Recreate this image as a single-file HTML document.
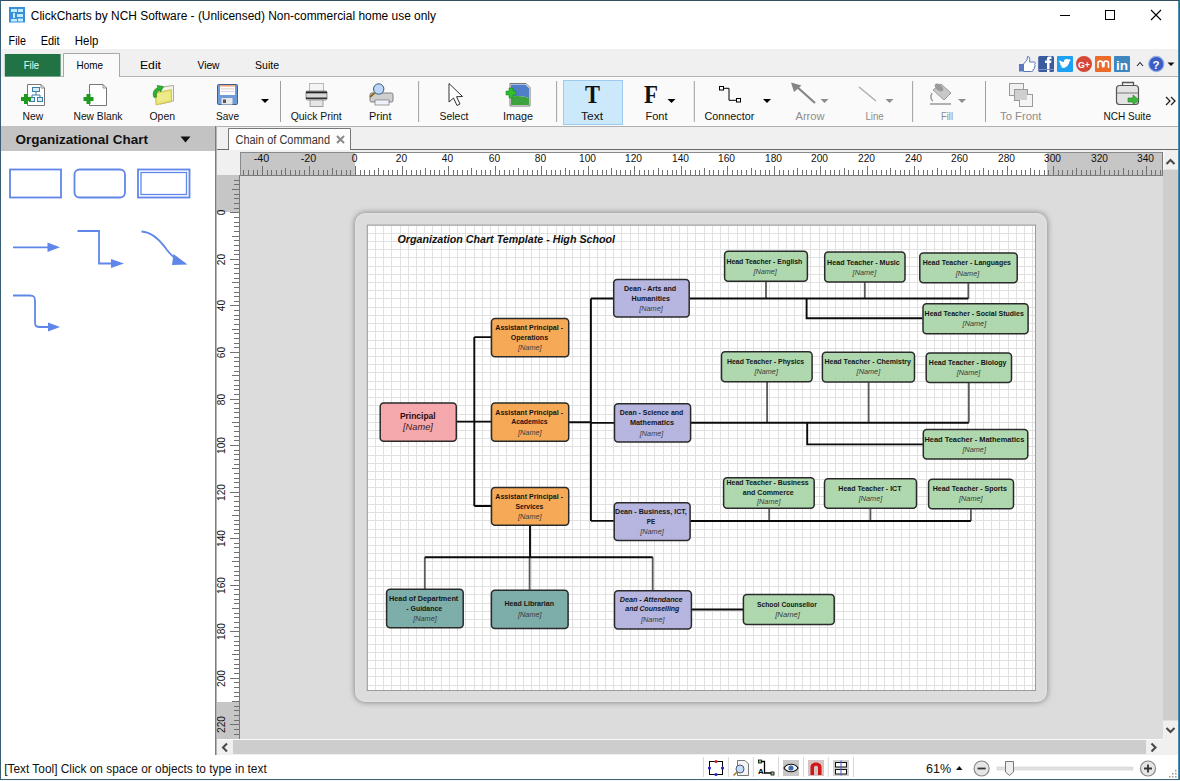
<!DOCTYPE html>
<html><head><meta charset="utf-8"><style>
html,body{margin:0;padding:0;width:1180px;height:781px;overflow:hidden;background:#fff}
svg{display:block;font-family:"Liberation Sans",sans-serif}
</style></head><body>
<svg width="1180" height="781" viewBox="0 0 1180 781">
<rect x="0" y="0" width="1180" height="781" fill="#ffffff" /><rect x="9" y="7" width="16" height="15.5" fill="#3a8fdc" /><rect x="11" y="9" width="6" height="3" fill="#bff0ff" /><rect x="18" y="9" width="5" height="3" fill="#bff0ff" /><rect x="13" y="13" width="2" height="5" fill="#bff0ff" /><rect x="17" y="14" width="6" height="3" fill="#bff0ff" /><rect x="11" y="19" width="6" height="2.5" fill="#bff0ff" /><rect x="18" y="18.5" width="5" height="3" fill="#bff0ff" /><text x="30.80" y="19.60" font-size="12" font-weight="normal" font-style="normal" fill="#000" textLength="405.20" lengthAdjust="spacingAndGlyphs" >ClickCharts by NCH Software - (Unlicensed) Non-commercial home use only</text><rect x="1060" y="15" width="10" height="1" fill="#000" /><rect x="1105.5" y="10.5" width="9" height="9" fill="none" stroke="#000" stroke-width="1"/><path d="M1151 10 L1161 20 M1161 10 L1151 20" stroke="#000" stroke-width="1.1"/><text x="8.60" y="44.70" font-size="12" font-weight="normal" font-style="normal" fill="#000" textLength="17.30" lengthAdjust="spacingAndGlyphs" >File</text><text x="40.70" y="44.70" font-size="12" font-weight="normal" font-style="normal" fill="#000" textLength="18.90" lengthAdjust="spacingAndGlyphs" >Edit</text><text x="74.80" y="44.70" font-size="12" font-weight="normal" font-style="normal" fill="#000" textLength="23.50" lengthAdjust="spacingAndGlyphs" >Help</text><rect x="1" y="49" width="1177" height="28" fill="#f0f0f0" /><rect x="61" y="76" width="1117" height="1" fill="#b4b4b4" /><rect x="4.8" y="54" width="55.8" height="22.6" fill="#217346" /><text x="23.80" y="69.00" font-size="11.5" font-weight="normal" font-style="normal" fill="#e8fff0" textLength="15.30" lengthAdjust="spacingAndGlyphs" >File</text><path d="M63.5 77 V53.5 H119.5 V77" fill="#fafafa" stroke="#a8a8a8" stroke-width="1"/><text x="76.60" y="69.00" font-size="11.5" font-weight="normal" font-style="normal" fill="#000" textLength="26.40" lengthAdjust="spacingAndGlyphs" >Home</text><text x="140.00" y="69.00" font-size="11.5" font-weight="normal" font-style="normal" fill="#000" textLength="21.00" lengthAdjust="spacingAndGlyphs" >Edit</text><text x="197.50" y="69.00" font-size="11.5" font-weight="normal" font-style="normal" fill="#000" textLength="22.00" lengthAdjust="spacingAndGlyphs" >View</text><text x="255.00" y="69.00" font-size="11.5" font-weight="normal" font-style="normal" fill="#000" textLength="24.00" lengthAdjust="spacingAndGlyphs" >Suite</text><rect x="1" y="77" width="1177" height="49" fill="#fafafa" /><rect x="0" y="0" width="1180" height="1" fill="#2f4f63" /><rect x="0" y="0" width="1" height="781" fill="#2f5f80" /><rect x="1178" y="0" width="2" height="781" fill="#4a8fb0" /><rect x="0" y="779" width="1180" height="2" fill="#4a8fb0" /><rect x="563.5" y="80.5" width="59" height="44" fill="#cce8fb" stroke="#9ccbef" stroke-width="1"/><text x="22.60" y="119.80" font-size="10.5" font-weight="normal" font-style="normal" fill="#111" textLength="20.60" lengthAdjust="spacingAndGlyphs" >New</text><text x="73.50" y="119.80" font-size="10.5" font-weight="normal" font-style="normal" fill="#111" textLength="49.00" lengthAdjust="spacingAndGlyphs" >New Blank</text><text x="149.50" y="119.80" font-size="10.5" font-weight="normal" font-style="normal" fill="#111" textLength="25.50" lengthAdjust="spacingAndGlyphs" >Open</text><text x="216.00" y="119.80" font-size="10.5" font-weight="normal" font-style="normal" fill="#111" textLength="23.00" lengthAdjust="spacingAndGlyphs" >Save</text><text x="290.70" y="119.80" font-size="10.5" font-weight="normal" font-style="normal" fill="#111" textLength="51.10" lengthAdjust="spacingAndGlyphs" >Quick Print</text><text x="369.00" y="119.80" font-size="10.5" font-weight="normal" font-style="normal" fill="#111" textLength="22.50" lengthAdjust="spacingAndGlyphs" >Print</text><text x="439.50" y="119.80" font-size="10.5" font-weight="normal" font-style="normal" fill="#111" textLength="29.00" lengthAdjust="spacingAndGlyphs" >Select</text><text x="503.00" y="119.80" font-size="10.5" font-weight="normal" font-style="normal" fill="#111" textLength="30.00" lengthAdjust="spacingAndGlyphs" >Image</text><text x="581.00" y="119.80" font-size="10.5" font-weight="normal" font-style="normal" fill="#111" textLength="22.00" lengthAdjust="spacingAndGlyphs" >Text</text><text x="645.50" y="119.80" font-size="10.5" font-weight="normal" font-style="normal" fill="#111" textLength="22.00" lengthAdjust="spacingAndGlyphs" >Font</text><text x="704.50" y="119.80" font-size="10.5" font-weight="normal" font-style="normal" fill="#111" textLength="49.80" lengthAdjust="spacingAndGlyphs" >Connector</text><text x="795.50" y="119.80" font-size="10.5" font-weight="normal" font-style="normal" fill="#8c8c8c" textLength="29.00" lengthAdjust="spacingAndGlyphs" >Arrow</text><text x="865.40" y="119.80" font-size="10.5" font-weight="normal" font-style="normal" fill="#8c8c8c" textLength="18.40" lengthAdjust="spacingAndGlyphs" >Line</text><text x="941.00" y="119.80" font-size="10.5" font-weight="normal" font-style="normal" fill="#8c8c8c" textLength="12.00" lengthAdjust="spacingAndGlyphs" >Fill</text><text x="1000.00" y="119.80" font-size="10.5" font-weight="normal" font-style="normal" fill="#8c8c8c" textLength="41.50" lengthAdjust="spacingAndGlyphs" >To Front</text><text x="1103.50" y="119.80" font-size="10.5" font-weight="normal" font-style="normal" fill="#111" textLength="47.50" lengthAdjust="spacingAndGlyphs" >NCH Suite</text><rect x="280.0" y="81" width="1" height="41" fill="#a0a0a0" /><rect x="418.1" y="81" width="1" height="41" fill="#a0a0a0" /><rect x="556.1" y="81" width="1" height="41" fill="#a0a0a0" /><rect x="693.8" y="81" width="1" height="41" fill="#a0a0a0" /><rect x="912.1" y="81" width="1" height="41" fill="#a0a0a0" /><rect x="985.0" y="81" width="1" height="41" fill="#a0a0a0" /><path d="M261 99 H269 L265 103 Z" fill="#000"/><path d="M667.5 99 H675.5 L671.5 103 Z" fill="#000"/><path d="M763 99 H771 L767 103 Z" fill="#000"/><path d="M820.5 99 H828.5 L824.5 103 Z" fill="#8c8c8c"/><path d="M885.5 99 H893.5 L889.5 103 Z" fill="#8c8c8c"/><path d="M958 99 H966 L962 103 Z" fill="#8c8c8c"/><path d="M27.5 84.5 H41 L44.5 88 V105.5 H27.5 Z" fill="#fff" stroke="#777" stroke-width="1"/><path d="M41 84.5 V88 H44.5" fill="none" stroke="#777" stroke-width="0.8"/><g fill="#d6ecfa" stroke="#3a7fa8" stroke-width="1"><rect x="32.5" y="87.5" width="7" height="4"/><rect x="29.5" y="97.5" width="5" height="4"/><rect x="37.5" y="97.5" width="5" height="4"/></g><path d="M36 91.5 V95 M32 97.5 V95 H40 V97.5" stroke="#3a7fa8" stroke-width="1" fill="none"/><path d="M21 97 H24 V94 H28 V97 H31 V101 H28 V104 H24 V101 H21 Z" fill="#1f9a1f"/><path d="M89.5 84.5 H103 L106.5 88 V105.5 H89.5 Z" fill="#fff" stroke="#777" stroke-width="1"/><path d="M103 84.5 V88 H106.5" fill="none" stroke="#777" stroke-width="0.8"/><path d="M83.5 97 H86.5 V94 H90.5 V97 H93.5 V101 H90.5 V104 H86.5 V101 H83.5 Z" fill="#1f9a1f"/><path d="M158.5 88.5 L166 86.5 L173.5 85.5 V101 L160 104 Z" fill="#f6f6e8" stroke="#a0a090" stroke-width="0.9"/><path d="M155 93 L171.5 89.5 V101.5 L156 105 Z" fill="#e3df6a" stroke="#c9b84a" stroke-width="0.7"/><path d="M157 94 L170 91.5 V100 L157.5 103 Z" fill="#eeea88"/><path d="M154 97.5 C152 93 154 89 158 87.5 L157 85.5 L163.5 86.5 L160.5 92 L159.5 90 C157 91 156 94 156.5 97 Z" fill="#2fae2f" stroke="#1c7c1c" stroke-width="0.6"/><rect x="217.5" y="84.5" width="20" height="20" rx="1.2" fill="#6f9bd8" stroke="#3d5f9a" stroke-width="1"/><rect x="220" y="85" width="15" height="10" fill="#fdfdfd"/><rect x="220" y="85" width="15" height="1.5" fill="#f0a070"/><rect x="221" y="88.5" width="13" height="0.8" fill="#d8c8c8"/><rect x="221" y="91" width="13" height="0.8" fill="#c8d0e0"/><rect x="221.5" y="98" width="11" height="6.5" fill="#e8e8e8"/><rect x="223" y="99.5" width="3" height="3.5" fill="#555"/><rect x="309.5" y="83.5" width="14" height="8" fill="#f4f4f4" stroke="#aaa" stroke-width="0.8"/><rect x="306" y="91" width="21" height="9" rx="1.5" fill="#d8d8d8" stroke="#777" stroke-width="0.8"/><rect x="306" y="91.5" width="21" height="1.8" fill="#222"/><rect x="306" y="97.5" width="21" height="1.5" fill="#333"/><rect x="310" y="100" width="13" height="6.5" fill="#e6e6e6" stroke="#888" stroke-width="0.8"/><rect x="370" y="93" width="23" height="9" rx="1.5" fill="#cfcfcf" stroke="#666" stroke-width="0.8"/><rect x="375" y="100" width="14" height="5" fill="#eef2fa" stroke="#666" stroke-width="0.6"/><circle cx="378.7" cy="89" r="5.2" fill="#bcd6f5" stroke="#3a5a80" stroke-width="1"/><path d="M374.5 93 L370 97" stroke="#8a6a20" stroke-width="2"/><path d="M449 83.5 L449 102 L453.5 98 L457 105.5 L460 104 L456.5 96.7 L462.5 96.5 Z" fill="#fff" stroke="#333" stroke-width="1" stroke-linejoin="round"/><path d="M510 83.5 H526 L530 87.5 V106 H510 Z" fill="#fff" stroke="#555" stroke-width="0.8"/><path d="M511 84.5 H525.5 L529 88 V98 C524 96 516 95 511 97 Z" fill="#4f7fc8"/><path d="M511 97 C516 95 524 96 529 98 V105 H511 Z" fill="#3ea23e"/><path d="M506 91 H509 V88 H513 V91 H516 V95 H513 V98 H509 V95 H506 Z" fill="#2fbf2f" stroke="#1a7a1a" stroke-width="0.5"/><text x="585" y="103.3" font-family="Liberation Serif" font-weight="bold" font-size="25" fill="#111" textLength="15" lengthAdjust="spacingAndGlyphs">T</text><text x="644" y="103.3" font-family="Liberation Serif" font-weight="bold" font-size="25" fill="#111" textLength="14" lengthAdjust="spacingAndGlyphs">F</text><rect x="719.5" y="86.5" width="4" height="3.5" fill="#fff" stroke="#000" stroke-width="1"/><rect x="736.5" y="98.5" width="4" height="3.5" fill="#fff" stroke="#000" stroke-width="1"/><path d="M723.5 88.3 H729 V100.3 H736.5" fill="none" stroke="#000" stroke-width="1"/><path d="M815 103 L796 86" stroke="#858585" stroke-width="2.2"/><path d="M791 82.5 L801.5 85.5 L794 92 Z" fill="#858585"/><path d="M859 87 L876 101" stroke="#a8a8a8" stroke-width="1.2"/><path d="M933 90 L941 84 L951 93 L944 100 Z" fill="#c8c8c8" stroke="#888" stroke-width="0.8"/><ellipse cx="939" cy="87.5" rx="5" ry="3" fill="#9a9a9a" transform="rotate(40 939 87.5)"/><path d="M932 93 C930 97 931 100 933 101 M930 104 H951" stroke="#999" stroke-width="1.5" fill="none"/><rect x="1009.5" y="83.5" width="14" height="12" fill="#f0f0f0" stroke="#9a9a9a" stroke-width="1"/><rect x="1014.5" y="89.5" width="13" height="11" fill="#cfcfcf" stroke="#9a9a9a" stroke-width="1"/><rect x="1019.5" y="94.5" width="13" height="12" fill="#f4f4f4" stroke="#9a9a9a" stroke-width="1"/><rect x="1015" y="90" width="12" height="10" fill="#cfcfcf"/><path d="M1122.5 85 V82.5 H1133.5 V85" fill="none" stroke="#555" stroke-width="1.3"/><rect x="1116.5" y="85.5" width="22" height="19" rx="3" fill="#e4e4e4" stroke="#555" stroke-width="1.2"/><path d="M1117 93 H1138" stroke="#777" stroke-width="1"/><path d="M1128 98 H1133 V95 L1139 100 L1133 105 V102 H1128 Z" fill="#3cb83c" stroke="#1f7a1f" stroke-width="0.6"/><path d="M1166 97 L1170 101 L1166 105 M1171 97 L1175 101 L1171 105" fill="none" stroke="#222" stroke-width="1.3"/><path d="M1019 64 H1023 V71.5 H1019 Z" fill="#5a78c0"/><path d="M1023.5 64 L1027 60 L1027.5 56.5 C1030 56.5 1030 59 1029.5 62 H1034.5 C1035.5 62 1035.5 64 1034.5 64.5 C1035.5 65 1035.5 67 1034 67 C1035 68 1034.5 69.5 1033 69.5 C1033.5 70.5 1033 71.5 1031.5 71.5 H1023.5 Z" fill="#fff" stroke="#5a78c0" stroke-width="1"/><rect x="1038.2" y="56" width="15.8" height="16" rx="1.5" fill="#3b5ba0"/><path d="M1047 72 V63 H1045 V60.5 H1047 V58.5 C1047 57 1048 56.5 1050 56.5 H1051.5 V59 H1050 C1049.5 59 1049.5 59.5 1049.5 60 V60.5 H1051.5 L1051 63 H1049.5 V72 Z" fill="#fff"/><rect x="1038.5" y="69" width="15.3" height="1" fill="#7a90c8"/><rect x="1057" y="56" width="16" height="16" rx="1" fill="#1da1f2"/><path d="M1059.5 67.5 C1063 69 1068 68 1069.5 61.5 L1071 60 L1069.5 60.3 L1070.5 59 C1069 59.6 1068 59.5 1067 59 C1065 58.5 1063.5 60.5 1064 62 C1062 62 1060.5 61 1059.5 60 C1059 61.5 1059.5 63 1061 64 L1060 63.8 C1060.2 65 1061 65.7 1062 66 L1061 66 C1061.5 67 1062.5 67.3 1063.2 67.3 C1062 68 1060.8 68 1059.5 67.5 Z" fill="#fff"/><circle cx="1084" cy="64" r="8" fill="#d34836"/><text x="1078" y="68" font-size="9" font-weight="bold" fill="#fff" textLength="12" lengthAdjust="spacingAndGlyphs">G+</text><rect x="1095" y="56" width="16" height="16" rx="1" fill="#eb6b2b"/><path d="M1098 68 V63 C1098 60.5 1102.5 60.5 1102.5 63 V66 C1102.5 67 1104 67 1104 66 V63 C1104 60.5 1108.5 60.5 1108.5 63 V68" fill="none" stroke="#fff" stroke-width="1.6"/><rect x="1114" y="56" width="16" height="16" rx="1" fill="#3e86c0"/><text x="1116" y="69.5" font-size="12" font-weight="bold" fill="#fff" textLength="12" lengthAdjust="spacingAndGlyphs">in</text><path d="M1137 66 L1140 62.5 L1143 66" fill="none" stroke="#222" stroke-width="1.1"/><circle cx="1156.3" cy="64" r="7.6" fill="#3a5dc8" stroke="#9ab0e0" stroke-width="1.2"/><text x="1152.5" y="68.5" font-size="11.5" font-weight="bold" fill="#fff">?</text><path d="M1167.5 62.5 H1174.5 L1171 66 Z" fill="#111"/><rect x="1" y="126" width="214" height="25" fill="#c3c3c3" /><text x="15.50" y="143.50" font-size="13" font-weight="bold" font-style="normal" fill="#111" textLength="132.50" lengthAdjust="spacingAndGlyphs" >Organizational Chart</text><path d="M180.5 136.5 H190.5 L185.5 142.5 Z" fill="#111"/><rect x="1" y="151" width="214" height="604" fill="#ffffff" /><rect x="10" y="169.5" width="51" height="28" fill="none" stroke="#5f86e8" stroke-width="1.8"/><rect x="74.5" y="169.5" width="50.5" height="28" rx="5" fill="none" stroke="#5f86e8" stroke-width="1.8"/><rect x="138" y="169.5" width="51.5" height="28" fill="none" stroke="#5f86e8" stroke-width="1.8"/><rect x="141" y="172.5" width="45.5" height="22" fill="none" stroke="#5f86e8" stroke-width="1.3"/><path d="M13 247.3 H49" stroke="#5f86e8" stroke-width="1.8"/><path d="M47.5 242.5 L60 247.3 L47.5 252 Z" fill="#5f86e8"/><path d="M77.5 231 H99 V263.5 H112" fill="none" stroke="#5f86e8" stroke-width="1.8"/><path d="M111 259 L124 263.5 L111 268 Z" fill="#5f86e8"/><path d="M141.5 231.5 C152 232 160 240 167 250 C171 255 174 258 178 260" fill="none" stroke="#5f86e8" stroke-width="1.8"/><path d="M173.5 254 L187.5 264.5 L172 265 Z" fill="#5f86e8"/><path d="M13 295.5 H30 C34 295.5 35 297 35 301 V322 C35 326 36 327 40 327 H49" fill="none" stroke="#5f86e8" stroke-width="1.8"/><path d="M48 322.5 L60 327 L48 331.5 Z" fill="#5f86e8"/><rect x="215" y="126" width="1" height="629" fill="#7c7c7c" /><rect x="216" y="126" width="1" height="629" fill="#b4b4b4" /><rect x="217" y="126" width="961" height="26" fill="#f0f0f0" /><path d="M228.5 150 V128.5 H350.5 V150" fill="#fdfdfd" stroke="#777" stroke-width="1"/><rect x="217" y="149" width="946" height="1" fill="#6a6a6a" /><rect x="229" y="149" width="121" height="1" fill="#fdfdfd" /><text x="235.50" y="144.00" font-size="12" font-weight="normal" font-style="normal" fill="#333" textLength="94.50" lengthAdjust="spacingAndGlyphs" >Chain of Command</text><path d="M337 136 L344 143 M344 136 L337 143" stroke="#8a8a8a" stroke-width="2"/><rect x="217" y="150" width="946" height="2" fill="#f0f0f0" /><rect x="217" y="152" width="23" height="23" fill="#f0f0f0" /><rect x="240" y="152" width="922" height="23.5" fill="#c6c6c6" /><rect x="355" y="152" width="692" height="23.5" fill="#ffffff" /><rect x="240" y="152" width="922" height="1" fill="#8a8a8a" /><rect x="240" y="175" width="922" height="1" fill="#7a7a7a" /><rect x="240" y="152" width="1" height="24" fill="#8a8a8a" /><path d="M243.5 170 V175 M248.5 170 V175 M253.5 170 V175 M257.5 170 V175 M262.5 166.3 V175 M267.5 170 V175 M271.5 170 V175 M276.5 170 V175 M281.5 170 V175 M285.5 168 V175 M290.5 170 V175 M295.5 170 V175 M299.5 170 V175 M304.5 170 V175 M309.5 166.3 V175 M313.5 170 V175 M318.5 170 V175 M323.5 170 V175 M327.5 170 V175 M332.5 168 V175 M336.5 170 V175 M341.5 170 V175 M346.5 170 V175 M350.5 170 V175 M355.5 166.3 V175 M360.5 170 V175 M364.5 170 V175 M369.5 170 V175 M374.5 170 V175 M378.5 168 V175 M383.5 170 V175 M388.5 170 V175 M392.5 170 V175 M397.5 170 V175 M402.5 166.3 V175 M406.5 170 V175 M411.5 170 V175 M416.5 170 V175 M420.5 170 V175 M425.5 168 V175 M430.5 170 V175 M434.5 170 V175 M439.5 170 V175 M444.5 170 V175 M448.5 166.3 V175 M453.5 170 V175 M457.5 170 V175 M462.5 170 V175 M467.5 170 V175 M471.5 168 V175 M476.5 170 V175 M481.5 170 V175 M485.5 170 V175 M490.5 170 V175 M495.5 166.3 V175 M499.5 170 V175 M504.5 170 V175 M509.5 170 V175 M513.5 170 V175 M518.5 168 V175 M523.5 170 V175 M527.5 170 V175 M532.5 170 V175 M537.5 170 V175 M541.5 166.3 V175 M546.5 170 V175 M551.5 170 V175 M555.5 170 V175 M560.5 170 V175 M565.5 168 V175 M569.5 170 V175 M574.5 170 V175 M578.5 170 V175 M583.5 170 V175 M588.5 166.3 V175 M592.5 170 V175 M597.5 170 V175 M602.5 170 V175 M606.5 170 V175 M611.5 168 V175 M616.5 170 V175 M620.5 170 V175 M625.5 170 V175 M630.5 170 V175 M634.5 166.3 V175 M639.5 170 V175 M644.5 170 V175 M648.5 170 V175 M653.5 170 V175 M658.5 168 V175 M662.5 170 V175 M667.5 170 V175 M672.5 170 V175 M676.5 170 V175 M681.5 166.3 V175 M685.5 170 V175 M690.5 170 V175 M695.5 170 V175 M699.5 170 V175 M704.5 168 V175 M709.5 170 V175 M713.5 170 V175 M718.5 170 V175 M723.5 170 V175 M727.5 166.3 V175 M732.5 170 V175 M737.5 170 V175 M741.5 170 V175 M746.5 170 V175 M751.5 168 V175 M755.5 170 V175 M760.5 170 V175 M765.5 170 V175 M769.5 170 V175 M774.5 166.3 V175 M779.5 170 V175 M783.5 170 V175 M788.5 170 V175 M793.5 170 V175 M797.5 168 V175 M802.5 170 V175 M806.5 170 V175 M811.5 170 V175 M816.5 170 V175 M820.5 166.3 V175 M825.5 170 V175 M830.5 170 V175 M834.5 170 V175 M839.5 170 V175 M844.5 168 V175 M848.5 170 V175 M853.5 170 V175 M858.5 170 V175 M862.5 170 V175 M867.5 166.3 V175 M872.5 170 V175 M876.5 170 V175 M881.5 170 V175 M886.5 170 V175 M890.5 168 V175 M895.5 170 V175 M900.5 170 V175 M904.5 170 V175 M909.5 170 V175 M914.5 166.3 V175 M918.5 170 V175 M923.5 170 V175 M927.5 170 V175 M932.5 170 V175 M937.5 168 V175 M941.5 170 V175 M946.5 170 V175 M951.5 170 V175 M955.5 170 V175 M960.5 166.3 V175 M965.5 170 V175 M969.5 170 V175 M974.5 170 V175 M979.5 170 V175 M983.5 168 V175 M988.5 170 V175 M993.5 170 V175 M997.5 170 V175 M1002.5 170 V175 M1007.5 166.3 V175 M1011.5 170 V175 M1016.5 170 V175 M1021.5 170 V175 M1025.5 170 V175 M1030.5 168 V175 M1034.5 170 V175 M1039.5 170 V175 M1044.5 170 V175 M1048.5 170 V175 M1053.5 166.3 V175 M1058.5 170 V175 M1062.5 170 V175 M1067.5 170 V175 M1072.5 170 V175 M1076.5 168 V175 M1081.5 170 V175 M1086.5 170 V175 M1090.5 170 V175 M1095.5 170 V175 M1100.5 166.3 V175 M1104.5 170 V175 M1109.5 170 V175 M1114.5 170 V175 M1118.5 170 V175 M1123.5 168 V175 M1128.5 170 V175 M1132.5 170 V175 M1137.5 170 V175 M1142.5 170 V175 M1146.5 166.3 V175 M1151.5 170 V175 M1155.5 170 V175 M1160.5 170 V175" stroke="#707070" stroke-width="1" shape-rendering="crispEdges"/><text x="261.50" y="162" font-size="10.2" text-anchor="middle" fill="#111" textLength="15.54" lengthAdjust="spacingAndGlyphs">-40</text><text x="308.50" y="162" font-size="10.2" text-anchor="middle" fill="#111" textLength="15.54" lengthAdjust="spacingAndGlyphs">-20</text><text x="354.50" y="162" font-size="10.2" text-anchor="middle" fill="#111" textLength="5.67" lengthAdjust="spacingAndGlyphs">0</text><text x="401.50" y="162" font-size="10.2" text-anchor="middle" fill="#111" textLength="11.34" lengthAdjust="spacingAndGlyphs">20</text><text x="447.50" y="162" font-size="10.2" text-anchor="middle" fill="#111" textLength="11.34" lengthAdjust="spacingAndGlyphs">40</text><text x="494.50" y="162" font-size="10.2" text-anchor="middle" fill="#111" textLength="11.34" lengthAdjust="spacingAndGlyphs">60</text><text x="540.50" y="162" font-size="10.2" text-anchor="middle" fill="#111" textLength="11.34" lengthAdjust="spacingAndGlyphs">80</text><text x="587.50" y="162" font-size="10.2" text-anchor="middle" fill="#111" textLength="17.01" lengthAdjust="spacingAndGlyphs">100</text><text x="633.50" y="162" font-size="10.2" text-anchor="middle" fill="#111" textLength="17.01" lengthAdjust="spacingAndGlyphs">120</text><text x="680.50" y="162" font-size="10.2" text-anchor="middle" fill="#111" textLength="17.01" lengthAdjust="spacingAndGlyphs">140</text><text x="726.50" y="162" font-size="10.2" text-anchor="middle" fill="#111" textLength="17.01" lengthAdjust="spacingAndGlyphs">160</text><text x="773.50" y="162" font-size="10.2" text-anchor="middle" fill="#111" textLength="17.01" lengthAdjust="spacingAndGlyphs">180</text><text x="819.50" y="162" font-size="10.2" text-anchor="middle" fill="#111" textLength="17.01" lengthAdjust="spacingAndGlyphs">200</text><text x="866.50" y="162" font-size="10.2" text-anchor="middle" fill="#111" textLength="17.01" lengthAdjust="spacingAndGlyphs">220</text><text x="913.50" y="162" font-size="10.2" text-anchor="middle" fill="#111" textLength="17.01" lengthAdjust="spacingAndGlyphs">240</text><text x="959.50" y="162" font-size="10.2" text-anchor="middle" fill="#111" textLength="17.01" lengthAdjust="spacingAndGlyphs">260</text><text x="1006.50" y="162" font-size="10.2" text-anchor="middle" fill="#111" textLength="17.01" lengthAdjust="spacingAndGlyphs">280</text><text x="1052.50" y="162" font-size="10.2" text-anchor="middle" fill="#111" textLength="17.01" lengthAdjust="spacingAndGlyphs">300</text><text x="1099.50" y="162" font-size="10.2" text-anchor="middle" fill="#111" textLength="17.01" lengthAdjust="spacingAndGlyphs">320</text><text x="1145.50" y="162" font-size="10.2" text-anchor="middle" fill="#111" textLength="17.01" lengthAdjust="spacingAndGlyphs">340</text><rect x="217" y="175" width="22.5" height="564" fill="#c6c6c6" /><rect x="217" y="212" width="22.5" height="490" fill="#ffffff" /><rect x="239" y="175" width="1" height="564" fill="#7a7a7a" /><path d="M234 180.5 H239 M234 184.5 H239 M232.2 189.5 H239 M234 194.5 H239 M234 198.5 H239 M234 203.5 H239 M234 208.5 H239 M230.3 212.5 H239 M234 217.5 H239 M234 222.5 H239 M234 226.5 H239 M234 231.5 H239 M232.2 236.5 H239 M234 240.5 H239 M234 245.5 H239 M234 250.5 H239 M234 254.5 H239 M230.3 259.5 H239 M234 264.5 H239 M234 268.5 H239 M234 273.5 H239 M234 278.5 H239 M232.2 282.5 H239 M234 287.5 H239 M234 292.5 H239 M234 296.5 H239 M234 301.5 H239 M230.3 305.5 H239 M234 310.5 H239 M234 315.5 H239 M234 319.5 H239 M234 324.5 H239 M232.2 329.5 H239 M234 333.5 H239 M234 338.5 H239 M234 343.5 H239 M234 347.5 H239 M230.3 352.5 H239 M234 357.5 H239 M234 361.5 H239 M234 366.5 H239 M234 371.5 H239 M232.2 375.5 H239 M234 380.5 H239 M234 385.5 H239 M234 389.5 H239 M234 394.5 H239 M230.3 399.5 H239 M234 403.5 H239 M234 408.5 H239 M234 412.5 H239 M234 417.5 H239 M232.2 422.5 H239 M234 426.5 H239 M234 431.5 H239 M234 436.5 H239 M234 440.5 H239 M230.3 445.5 H239 M234 450.5 H239 M234 454.5 H239 M234 459.5 H239 M234 464.5 H239 M232.2 468.5 H239 M234 473.5 H239 M234 478.5 H239 M234 482.5 H239 M234 487.5 H239 M230.3 492.5 H239 M234 496.5 H239 M234 501.5 H239 M234 506.5 H239 M234 510.5 H239 M232.2 515.5 H239 M234 520.5 H239 M234 524.5 H239 M234 529.5 H239 M234 533.5 H239 M230.3 538.5 H239 M234 543.5 H239 M234 547.5 H239 M234 552.5 H239 M234 557.5 H239 M232.2 561.5 H239 M234 566.5 H239 M234 571.5 H239 M234 575.5 H239 M234 580.5 H239 M230.3 585.5 H239 M234 589.5 H239 M234 594.5 H239 M234 599.5 H239 M234 603.5 H239 M232.2 608.5 H239 M234 613.5 H239 M234 617.5 H239 M234 622.5 H239 M234 627.5 H239 M230.3 631.5 H239 M234 636.5 H239 M234 641.5 H239 M234 645.5 H239 M234 650.5 H239 M232.2 654.5 H239 M234 659.5 H239 M234 664.5 H239 M234 668.5 H239 M234 673.5 H239 M230.3 678.5 H239 M234 682.5 H239 M234 687.5 H239 M234 692.5 H239 M234 696.5 H239 M232.2 701.5 H239 M234 706.5 H239 M234 710.5 H239 M234 715.5 H239 M234 720.5 H239 M230.3 724.5 H239 M234 729.5 H239 M234 734.5 H239" stroke="#707070" stroke-width="1" shape-rendering="crispEdges"/><text x="0" y="0" font-size="10.2" text-anchor="middle" fill="#111" textLength="5.67" lengthAdjust="spacingAndGlyphs" transform="translate(224.6 212.50) rotate(-90)">0</text><text x="0" y="0" font-size="10.2" text-anchor="middle" fill="#111" textLength="11.34" lengthAdjust="spacingAndGlyphs" transform="translate(224.6 259.50) rotate(-90)">20</text><text x="0" y="0" font-size="10.2" text-anchor="middle" fill="#111" textLength="11.34" lengthAdjust="spacingAndGlyphs" transform="translate(224.6 305.50) rotate(-90)">40</text><text x="0" y="0" font-size="10.2" text-anchor="middle" fill="#111" textLength="11.34" lengthAdjust="spacingAndGlyphs" transform="translate(224.6 352.50) rotate(-90)">60</text><text x="0" y="0" font-size="10.2" text-anchor="middle" fill="#111" textLength="11.34" lengthAdjust="spacingAndGlyphs" transform="translate(224.6 399.50) rotate(-90)">80</text><text x="0" y="0" font-size="10.2" text-anchor="middle" fill="#111" textLength="17.01" lengthAdjust="spacingAndGlyphs" transform="translate(224.6 445.50) rotate(-90)">100</text><text x="0" y="0" font-size="10.2" text-anchor="middle" fill="#111" textLength="17.01" lengthAdjust="spacingAndGlyphs" transform="translate(224.6 492.50) rotate(-90)">120</text><text x="0" y="0" font-size="10.2" text-anchor="middle" fill="#111" textLength="17.01" lengthAdjust="spacingAndGlyphs" transform="translate(224.6 538.50) rotate(-90)">140</text><text x="0" y="0" font-size="10.2" text-anchor="middle" fill="#111" textLength="17.01" lengthAdjust="spacingAndGlyphs" transform="translate(224.6 585.50) rotate(-90)">160</text><text x="0" y="0" font-size="10.2" text-anchor="middle" fill="#111" textLength="17.01" lengthAdjust="spacingAndGlyphs" transform="translate(224.6 631.50) rotate(-90)">180</text><text x="0" y="0" font-size="10.2" text-anchor="middle" fill="#111" textLength="17.01" lengthAdjust="spacingAndGlyphs" transform="translate(224.6 678.50) rotate(-90)">200</text><text x="0" y="0" font-size="10.2" text-anchor="middle" fill="#111" textLength="17.01" lengthAdjust="spacingAndGlyphs" transform="translate(224.6 724.50) rotate(-90)">220</text><rect x="240" y="176" width="923" height="563" fill="#dcdcdc" /><rect x="1163" y="150" width="15" height="589" fill="#f0f0f0" /><rect x="1163" y="169.5" width="15" height="551" fill="#cdcdcd" /><path d="M1166.5 164 L1170.5 160 L1174.5 164" fill="none" stroke="#4a4a4a" stroke-width="2.1"/><path d="M1166.5 728 L1170.5 732 L1174.5 728" fill="none" stroke="#4a4a4a" stroke-width="2.1"/><rect x="217" y="739" width="961" height="16" fill="#f0f0f0" /><rect x="217" y="739" width="946" height="1" fill="#fafafa" /><rect x="233" y="740" width="913" height="14" fill="#cdcdcd" /><path d="M227 743.5 L223 747.5 L227 751.5" fill="none" stroke="#4a4a4a" stroke-width="2.1"/><path d="M1151.5 743.5 L1155.5 747.5 L1151.5 751.5" fill="none" stroke="#4a4a4a" stroke-width="2.1"/><rect x="217" y="149" width="961" height="1" fill="#6a6a6a" /><rect x="229" y="149" width="121" height="1" fill="#fdfdfd" /><rect x="217" y="126" width="961" height="1" fill="#b0b0b0" /><rect x="1163" y="150" width="1" height="20" fill="#fafafa" /><rect x="1162" y="152" width="1" height="24" fill="#7a7a7a" /><defs><filter id="sh" x="-5%" y="-5%" width="110%" height="110%"><feGaussianBlur stdDeviation="3.2"/></filter></defs><rect x="355" y="213" width="692" height="489" rx="10" fill="#7a7a7a" filter="url(#sh)"/><rect x="355" y="213" width="692" height="489" rx="10" fill="#dcdcdc"/><rect x="356" y="214" width="690" height="487" rx="9" fill="none" stroke="#e2e2e2" stroke-width="1"/><rect x="367.3" y="225.1" width="668.2" height="465.4" fill="#ffffff"/><path d="M367.5 225 V691 M375.5 225 V691 M383.5 225 V691 M391.5 225 V691 M400.5 225 V691 M408.5 225 V691 M416.5 225 V691 M424.5 225 V691 M432.5 225 V691 M441.5 225 V691 M449.5 225 V691 M457.5 225 V691 M465.5 225 V691 M474.5 225 V691 M482.5 225 V691 M490.5 225 V691 M498.5 225 V691 M506.5 225 V691 M515.5 225 V691 M523.5 225 V691 M531.5 225 V691 M539.5 225 V691 M547.5 225 V691 M556.5 225 V691 M564.5 225 V691 M572.5 225 V691 M580.5 225 V691 M589.5 225 V691 M597.5 225 V691 M605.5 225 V691 M613.5 225 V691 M621.5 225 V691 M630.5 225 V691 M638.5 225 V691 M646.5 225 V691 M654.5 225 V691 M663.5 225 V691 M671.5 225 V691 M679.5 225 V691 M687.5 225 V691 M695.5 225 V691 M704.5 225 V691 M712.5 225 V691 M720.5 225 V691 M728.5 225 V691 M737.5 225 V691 M745.5 225 V691 M753.5 225 V691 M761.5 225 V691 M769.5 225 V691 M778.5 225 V691 M786.5 225 V691 M794.5 225 V691 M802.5 225 V691 M810.5 225 V691 M819.5 225 V691 M827.5 225 V691 M835.5 225 V691 M843.5 225 V691 M852.5 225 V691 M860.5 225 V691 M868.5 225 V691 M876.5 225 V691 M884.5 225 V691 M893.5 225 V691 M901.5 225 V691 M909.5 225 V691 M917.5 225 V691 M926.5 225 V691 M934.5 225 V691 M942.5 225 V691 M950.5 225 V691 M958.5 225 V691 M967.5 225 V691 M975.5 225 V691 M983.5 225 V691 M991.5 225 V691 M999.5 225 V691 M1008.5 225 V691 M1016.5 225 V691 M1024.5 225 V691 M1032.5 225 V691 M367 225.5 H1036 M367 233.5 H1036 M367 241.5 H1036 M367 249.5 H1036 M367 257.5 H1036 M367 266.5 H1036 M367 274.5 H1036 M367 282.5 H1036 M367 290.5 H1036 M367 298.5 H1036 M367 307.5 H1036 M367 315.5 H1036 M367 323.5 H1036 M367 331.5 H1036 M367 340.5 H1036 M367 348.5 H1036 M367 356.5 H1036 M367 364.5 H1036 M367 372.5 H1036 M367 381.5 H1036 M367 389.5 H1036 M367 397.5 H1036 M367 405.5 H1036 M367 414.5 H1036 M367 422.5 H1036 M367 430.5 H1036 M367 438.5 H1036 M367 446.5 H1036 M367 455.5 H1036 M367 463.5 H1036 M367 471.5 H1036 M367 479.5 H1036 M367 487.5 H1036 M367 496.5 H1036 M367 504.5 H1036 M367 512.5 H1036 M367 520.5 H1036 M367 529.5 H1036 M367 537.5 H1036 M367 545.5 H1036 M367 553.5 H1036 M367 561.5 H1036 M367 570.5 H1036 M367 578.5 H1036 M367 586.5 H1036 M367 594.5 H1036 M367 603.5 H1036 M367 611.5 H1036 M367 619.5 H1036 M367 627.5 H1036 M367 635.5 H1036 M367 644.5 H1036 M367 652.5 H1036 M367 660.5 H1036 M367 668.5 H1036 M367 676.5 H1036 M367 685.5 H1036" stroke="#e0e0e0" stroke-width="1" fill="none" shape-rendering="crispEdges"/><rect x="367.3" y="225.1" width="668.2" height="465.4" fill="none" stroke="#9a9a9a" stroke-width="1"/><text x="397.50" y="242.60" font-size="10" font-weight="bold" font-style="italic" fill="#111" textLength="217.50" lengthAdjust="spacingAndGlyphs" >Organization Chart Template - High School</text><path d="M766 281.6 V298.5 M864.8 282.3 V298.5 M968.4 283.2 V298.5 M767.1 382.1 V422.5 M868.6 382.4 V422.5 M968.8 383 V422.5 M769.2 508.6 V521 M870.4 508.6 V521 M970.9 509.2 V521 M424.8 557.3 V588.9 M529.6 557.3 V589.8 M652.7 557.3 V590.3" stroke="#5a5a5a" stroke-width="1.8" fill="none"/><path d="M456.7 421.6 H491.1 M474.3 337.1 V506 M474.3 337.1 H491.1 M474.3 506 H491.1 M569.1 422.2 H590.9 M590.9 422.9 H614.1 M590.9 298.5 V520.9 M590.9 298.5 H613.3 M590.9 520.9 H613.8 M689.6 298.5 H968.4 M806.6 298.5 V318.3 H922.6 M691 422.8 H968.8 M807.2 422.8 V444.4 H922.9 M690.5 521 H970.9 M530 525.6 V557.3 M424.8 557.3 H652.7 M691.8 609.5 H743" stroke="#0a0a0a" stroke-width="1.9" fill="none"/><rect x="724.60" y="251.30" width="82.80" height="29.90" rx="3.5" fill="#a9d5a9" fill-opacity="0.93" stroke="#2a2a2a" stroke-width="1.5"/><text x="726.40" y="263.60" font-size="6.8" font-weight="bold" font-style="normal" fill="#151515" textLength="75.90" lengthAdjust="spacingAndGlyphs" >Head Teacher - English</text><text x="753.40" y="274.20" font-size="6.8" font-weight="normal" font-style="italic" fill="#3a3a3a" textLength="23.50" lengthAdjust="spacingAndGlyphs" >[Name]</text><rect x="824.70" y="251.90" width="80.30" height="30.00" rx="3.5" fill="#a9d5a9" fill-opacity="0.93" stroke="#2a2a2a" stroke-width="1.5"/><text x="827.10" y="264.60" font-size="6.8" font-weight="bold" font-style="normal" fill="#151515" textLength="72.70" lengthAdjust="spacingAndGlyphs" >Head Teacher - Music</text><text x="852.60" y="274.80" font-size="6.8" font-weight="normal" font-style="italic" fill="#3a3a3a" textLength="23.60" lengthAdjust="spacingAndGlyphs" >[Name]</text><rect x="919.80" y="252.90" width="97.40" height="29.90" rx="3.5" fill="#a9d5a9" fill-opacity="0.93" stroke="#2a2a2a" stroke-width="1.5"/><text x="922.70" y="265.10" font-size="6.8" font-weight="bold" font-style="normal" fill="#151515" textLength="88.30" lengthAdjust="spacingAndGlyphs" >Head Teacher - Languages</text><text x="955.70" y="275.80" font-size="6.8" font-weight="normal" font-style="italic" fill="#3a3a3a" textLength="23.60" lengthAdjust="spacingAndGlyphs" >[Name]</text><rect x="613.70" y="279.40" width="75.50" height="37.70" rx="3.5" fill="#b0b0de" fill-opacity="0.93" stroke="#2a2a2a" stroke-width="1.5"/><text x="623.90" y="291.00" font-size="6.8" font-weight="bold" font-style="normal" fill="#151515" textLength="52.30" lengthAdjust="spacingAndGlyphs" >Dean - Arts and</text><text x="631.50" y="300.80" font-size="6.8" font-weight="bold" font-style="normal" fill="#151515" textLength="38.50" lengthAdjust="spacingAndGlyphs" >Humanities</text><text x="639.20" y="310.50" font-size="6.8" font-weight="normal" font-style="italic" fill="#3a3a3a" textLength="23.60" lengthAdjust="spacingAndGlyphs" >[Name]</text><rect x="923.00" y="303.80" width="105.10" height="29.90" rx="3.5" fill="#a9d5a9" fill-opacity="0.93" stroke="#2a2a2a" stroke-width="1.5"/><text x="924.60" y="315.80" font-size="6.8" font-weight="bold" font-style="normal" fill="#151515" textLength="99.20" lengthAdjust="spacingAndGlyphs" >Head Teacher - Social Studies</text><text x="962.60" y="326.10" font-size="6.8" font-weight="normal" font-style="italic" fill="#3a3a3a" textLength="23.60" lengthAdjust="spacingAndGlyphs" >[Name]</text><rect x="491.50" y="318.50" width="77.20" height="38.30" rx="3.5" fill="#f5a44a" fill-opacity="0.93" stroke="#2a2a2a" stroke-width="1.5"/><text x="495.30" y="330.10" font-size="6.8" font-weight="bold" font-style="normal" fill="#151515" textLength="67.70" lengthAdjust="spacingAndGlyphs" >Assistant Principal -</text><text x="510.70" y="339.90" font-size="6.8" font-weight="bold" font-style="normal" fill="#151515" textLength="37.40" lengthAdjust="spacingAndGlyphs" >Operations</text><text x="518.00" y="349.70" font-size="6.8" font-weight="normal" font-style="italic" fill="#3a3a3a" textLength="23.60" lengthAdjust="spacingAndGlyphs" >[Name]</text><rect x="721.50" y="351.70" width="90.60" height="30.00" rx="3.5" fill="#a9d5a9" fill-opacity="0.93" stroke="#2a2a2a" stroke-width="1.5"/><text x="727.00" y="363.70" font-size="6.8" font-weight="bold" font-style="normal" fill="#151515" textLength="77.20" lengthAdjust="spacingAndGlyphs" >Head Teacher - Physics</text><text x="754.40" y="374.10" font-size="6.8" font-weight="normal" font-style="italic" fill="#3a3a3a" textLength="23.60" lengthAdjust="spacingAndGlyphs" >[Name]</text><rect x="822.40" y="352.30" width="92.10" height="29.70" rx="3.5" fill="#a9d5a9" fill-opacity="0.93" stroke="#2a2a2a" stroke-width="1.5"/><text x="824.40" y="364.00" font-size="6.8" font-weight="bold" font-style="normal" fill="#151515" textLength="86.60" lengthAdjust="spacingAndGlyphs" >Head Teacher - Chemistry</text><text x="856.60" y="374.40" font-size="6.8" font-weight="normal" font-style="italic" fill="#3a3a3a" textLength="23.60" lengthAdjust="spacingAndGlyphs" >[Name]</text><rect x="926.20" y="352.90" width="85.30" height="29.70" rx="3.5" fill="#a9d5a9" fill-opacity="0.93" stroke="#2a2a2a" stroke-width="1.5"/><text x="928.80" y="364.50" font-size="6.8" font-weight="bold" font-style="normal" fill="#151515" textLength="77.70" lengthAdjust="spacingAndGlyphs" >Head Teacher - Biology</text><text x="956.80" y="375.00" font-size="6.8" font-weight="normal" font-style="italic" fill="#3a3a3a" textLength="23.60" lengthAdjust="spacingAndGlyphs" >[Name]</text><rect x="380.20" y="403.00" width="76.10" height="38.30" rx="3.5" fill="#f5a2a7" fill-opacity="0.93" stroke="#2a2a2a" stroke-width="1.5"/><text x="399.90" y="418.50" font-size="9" font-weight="bold" font-style="normal" fill="#2a0a10" textLength="35.80" lengthAdjust="spacingAndGlyphs" >Principal</text><text x="403.00" y="430.00" font-size="8.5" font-weight="normal" font-style="italic" fill="#3a1a20" textLength="29.90" lengthAdjust="spacingAndGlyphs" >[Name]</text><rect x="491.50" y="403.00" width="77.20" height="38.30" rx="3.5" fill="#f5a44a" fill-opacity="0.93" stroke="#2a2a2a" stroke-width="1.5"/><text x="495.30" y="414.60" font-size="6.8" font-weight="bold" font-style="normal" fill="#151515" textLength="67.70" lengthAdjust="spacingAndGlyphs" >Assistant Principal -</text><text x="511.20" y="424.40" font-size="6.8" font-weight="bold" font-style="normal" fill="#151515" textLength="36.40" lengthAdjust="spacingAndGlyphs" >Academics</text><text x="518.00" y="434.70" font-size="6.8" font-weight="normal" font-style="italic" fill="#3a3a3a" textLength="23.60" lengthAdjust="spacingAndGlyphs" >[Name]</text><rect x="614.50" y="403.80" width="76.10" height="38.10" rx="3.5" fill="#b0b0de" fill-opacity="0.93" stroke="#2a2a2a" stroke-width="1.5"/><text x="619.70" y="415.20" font-size="6.8" font-weight="bold" font-style="normal" fill="#151515" textLength="63.50" lengthAdjust="spacingAndGlyphs" >Dean - Science and</text><text x="630.00" y="425.00" font-size="6.8" font-weight="bold" font-style="normal" fill="#151515" textLength="44.00" lengthAdjust="spacingAndGlyphs" >Mathematics</text><text x="639.80" y="435.60" font-size="6.8" font-weight="normal" font-style="italic" fill="#3a3a3a" textLength="23.60" lengthAdjust="spacingAndGlyphs" >[Name]</text><rect x="923.30" y="429.40" width="104.50" height="29.70" rx="3.5" fill="#a9d5a9" fill-opacity="0.93" stroke="#2a2a2a" stroke-width="1.5"/><text x="924.40" y="441.50" font-size="6.8" font-weight="bold" font-style="normal" fill="#151515" textLength="99.90" lengthAdjust="spacingAndGlyphs" >Head Teacher -  Mathematics</text><text x="962.40" y="451.80" font-size="6.8" font-weight="normal" font-style="italic" fill="#3a3a3a" textLength="23.60" lengthAdjust="spacingAndGlyphs" >[Name]</text><rect x="723.60" y="477.80" width="90.60" height="30.40" rx="3.5" fill="#a9d5a9" fill-opacity="0.93" stroke="#2a2a2a" stroke-width="1.5"/><text x="726.50" y="484.80" font-size="6.8" font-weight="bold" font-style="normal" fill="#151515" textLength="82.20" lengthAdjust="spacingAndGlyphs" >Head Teacher - Business</text><text x="742.80" y="494.60" font-size="6.8" font-weight="bold" font-style="normal" fill="#151515" textLength="51.00" lengthAdjust="spacingAndGlyphs" >and Commerce</text><text x="757.00" y="504.10" font-size="6.8" font-weight="normal" font-style="italic" fill="#3a3a3a" textLength="23.60" lengthAdjust="spacingAndGlyphs" >[Name]</text><rect x="824.50" y="478.70" width="92.00" height="29.50" rx="3.5" fill="#a9d5a9" fill-opacity="0.93" stroke="#2a2a2a" stroke-width="1.5"/><text x="838.30" y="490.80" font-size="6.8" font-weight="bold" font-style="normal" fill="#151515" textLength="63.20" lengthAdjust="spacingAndGlyphs" >Head Teacher - ICT</text><text x="858.70" y="500.60" font-size="6.8" font-weight="normal" font-style="italic" fill="#3a3a3a" textLength="23.60" lengthAdjust="spacingAndGlyphs" >[Name]</text><rect x="928.60" y="479.30" width="84.90" height="29.50" rx="3.5" fill="#a9d5a9" fill-opacity="0.93" stroke="#2a2a2a" stroke-width="1.5"/><text x="932.70" y="491.40" font-size="6.8" font-weight="bold" font-style="normal" fill="#151515" textLength="74.10" lengthAdjust="spacingAndGlyphs" >Head Teacher - Sports</text><text x="959.00" y="501.20" font-size="6.8" font-weight="normal" font-style="italic" fill="#3a3a3a" textLength="23.60" lengthAdjust="spacingAndGlyphs" >[Name]</text><rect x="491.50" y="487.40" width="77.20" height="37.80" rx="3.5" fill="#f5a44a" fill-opacity="0.93" stroke="#2a2a2a" stroke-width="1.5"/><text x="495.30" y="499.00" font-size="6.8" font-weight="bold" font-style="normal" fill="#151515" textLength="67.70" lengthAdjust="spacingAndGlyphs" >Assistant Principal -</text><text x="515.40" y="508.80" font-size="6.8" font-weight="bold" font-style="normal" fill="#151515" textLength="28.00" lengthAdjust="spacingAndGlyphs" >Services</text><text x="518.00" y="519.20" font-size="6.8" font-weight="normal" font-style="italic" fill="#3a3a3a" textLength="23.60" lengthAdjust="spacingAndGlyphs" >[Name]</text><rect x="614.20" y="502.80" width="75.90" height="37.80" rx="3.5" fill="#b0b0de" fill-opacity="0.93" stroke="#2a2a2a" stroke-width="1.5"/><text x="615.00" y="514.40" font-size="6.8" font-weight="bold" font-style="normal" fill="#151515" textLength="71.80" lengthAdjust="spacingAndGlyphs" >Dean - Business,  ICT,</text><text x="646.80" y="523.70" font-size="6.8" font-weight="bold" font-style="normal" fill="#151515" textLength="8.40" lengthAdjust="spacingAndGlyphs" >PE</text><text x="640.20" y="534.00" font-size="6.8" font-weight="normal" font-style="italic" fill="#3a3a3a" textLength="23.60" lengthAdjust="spacingAndGlyphs" >[Name]</text><rect x="386.60" y="589.30" width="76.60" height="38.40" rx="3.5" fill="#74a8a4" fill-opacity="0.93" stroke="#2a2a2a" stroke-width="1.5"/><text x="389.00" y="601.00" font-size="6.8" font-weight="bold" font-style="normal" fill="#151515" textLength="69.30" lengthAdjust="spacingAndGlyphs" >Head of Department</text><text x="406.30" y="610.50" font-size="6.8" font-weight="bold" font-style="normal" fill="#151515" textLength="35.80" lengthAdjust="spacingAndGlyphs" >- Guidance</text><text x="413.20" y="621.10" font-size="6.8" font-weight="normal" font-style="italic" fill="#3a3a3a" textLength="23.60" lengthAdjust="spacingAndGlyphs" >[Name]</text><rect x="491.40" y="590.20" width="76.70" height="38.30" rx="3.5" fill="#74a8a4" fill-opacity="0.93" stroke="#2a2a2a" stroke-width="1.5"/><text x="504.50" y="606.30" font-size="6.8" font-weight="bold" font-style="normal" fill="#151515" textLength="49.50" lengthAdjust="spacingAndGlyphs" >Head Librarian</text><text x="518.00" y="616.90" font-size="6.8" font-weight="normal" font-style="italic" fill="#3a3a3a" textLength="23.60" lengthAdjust="spacingAndGlyphs" >[Name]</text><rect x="614.50" y="590.70" width="76.90" height="38.40" rx="3.5" fill="#b0b0de" fill-opacity="0.93" stroke="#2a2a2a" stroke-width="1.5"/><text x="619.70" y="601.50" font-size="6.8" font-weight="bold" font-style="italic" fill="#151515" textLength="62.90" lengthAdjust="spacingAndGlyphs" >Dean - Attendance</text><text x="625.30" y="611.30" font-size="6.8" font-weight="bold" font-style="italic" fill="#151515" textLength="54.00" lengthAdjust="spacingAndGlyphs" >and Counselling</text><text x="641.00" y="621.70" font-size="6.8" font-weight="normal" font-style="italic" fill="#3a3a3a" textLength="23.60" lengthAdjust="spacingAndGlyphs" >[Name]</text><rect x="743.40" y="594.60" width="90.80" height="30.00" rx="3.5" fill="#a9d5a9" fill-opacity="0.93" stroke="#2a2a2a" stroke-width="1.5"/><text x="756.90" y="606.70" font-size="6.8" font-weight="bold" font-style="normal" fill="#151515" textLength="59.90" lengthAdjust="spacingAndGlyphs" >School Counsellor</text><text x="775.20" y="616.60" font-size="6.8" font-weight="normal" font-style="italic" fill="#3a3a3a" textLength="24.80" lengthAdjust="spacingAndGlyphs" >[Name]</text><rect x="1" y="755" width="1177" height="24" fill="#ffffff" /><text x="4.20" y="772.50" font-size="12" font-weight="normal" font-style="normal" fill="#111" textLength="262.50" lengthAdjust="spacingAndGlyphs" >[Text Tool] Click on space or objects to type in text</text><rect x="702.9" y="757" width="1" height="20" fill="#d8d8d8" /><rect x="727.9" y="757" width="1" height="20" fill="#d8d8d8" /><rect x="752.8" y="757" width="1" height="20" fill="#d8d8d8" /><rect x="778.0" y="757" width="1" height="20" fill="#d8d8d8" /><rect x="803.0" y="757" width="1" height="20" fill="#d8d8d8" /><rect x="827.8" y="757" width="1" height="20" fill="#d8d8d8" /><rect x="853.0" y="757" width="1" height="20" fill="#d8d8d8" /><rect x="709.5" y="761.5" width="13" height="13" fill="none" stroke="#000" stroke-width="1"/><circle cx="716" cy="761.5" r="1.6" fill="#c22"/><circle cx="709.5" cy="768" r="1.6" fill="#22c"/><circle cx="722.5" cy="768" r="1.6" fill="#22c"/><circle cx="716" cy="774.5" r="1.6" fill="#22c"/><path d="M737.5 760.5 H745 L748.5 764 V775.5 H737.5 Z" fill="#f4f4f4" stroke="#777" stroke-width="1"/><circle cx="740" cy="769" r="4" fill="#bfe0f8" stroke="#557" stroke-width="1"/><path d="M737 772 L733.5 775.5" stroke="#a87a30" stroke-width="1.6"/><path d="M760 761.5 H764.5 V773 H772" fill="none" stroke="#000" stroke-width="1.3"/><rect x="758.5" y="760" width="3" height="3" fill="#8c8" stroke="#000" stroke-width="0.8"/><rect x="771" y="772" width="3" height="3" fill="#8c8" stroke="#000" stroke-width="0.8"/><text x="758" y="774" font-size="8" font-weight="bold" fill="#000">A</text><rect x="783" y="760" width="16" height="16" fill="#c8c8c8" /><path d="M784 768 C787 763 795 763 798 768 C795 773 787 773 784 768 Z" fill="#fff" stroke="#111" stroke-width="1.2"/><circle cx="791" cy="768" r="2.6" fill="#3a6ab0"/><rect x="808" y="760" width="16" height="16" fill="#d4c4c4" /><path d="M810.5 775 V767 C810.5 761 821.5 761 821.5 767 V775 H818 V767.5 C818 765 814 765 814 767.5 V775 Z" fill="#d01818"/><rect x="833" y="760" width="16" height="16" fill="#cfcfcf" /><rect x="835.5" y="762.5" width="11" height="4.5" fill="#fff" stroke="#111" stroke-width="1"/><rect x="835.5" y="769.5" width="11" height="4.5" fill="#fff" stroke="#111" stroke-width="1"/><path d="M841 760.5 V775.5" stroke="#5555cc" stroke-width="1"/><text x="926.00" y="772.60" font-size="12" font-weight="normal" font-style="normal" fill="#111" textLength="25.20" lengthAdjust="spacingAndGlyphs" >61%</text><path d="M956 770 L959.3 766 L962.5 770 Z" fill="#111"/><circle cx="981.6" cy="768.5" r="7.5" fill="#e6e6e6" stroke="#888" stroke-width="1.2"/><path d="M977.5 768.5 H985.7" stroke="#333" stroke-width="1.8"/><rect x="997" y="767" width="136" height="3" fill="#e2e2e2" stroke="#cfcfcf" stroke-width="0.6"/><path d="M1005.5 761.5 H1013.5 V772 L1009.5 775.5 L1005.5 772 Z" fill="#eee" stroke="#777" stroke-width="1"/><circle cx="1148" cy="768.5" r="7.5" fill="#e6e6e6" stroke="#888" stroke-width="1.2"/><path d="M1144 768.5 H1152 M1148 764.5 V772.5" stroke="#333" stroke-width="1.8"/><rect x="1175" y="770" width="1.5" height="1.5" fill="#999" /><rect x="1172" y="773" width="1.5" height="1.5" fill="#999" /><rect x="1175" y="773" width="1.5" height="1.5" fill="#999" /><rect x="1169" y="776" width="1.5" height="1.5" fill="#999" /><rect x="1172" y="776" width="1.5" height="1.5" fill="#999" /><rect x="1175" y="776" width="1.5" height="1.5" fill="#999" /><rect x="0" y="0" width="1180" height="1" fill="#34505f" /><rect x="0" y="0" width="1" height="780" fill="#3a5e74" /><rect x="1179" y="0" width="1" height="780" fill="#3f6275" /><rect x="0" y="779" width="1180" height="1" fill="#3f6275" /><rect x="0" y="780" width="1180" height="1" fill="#f4f8fa" />
</svg></body></html>
